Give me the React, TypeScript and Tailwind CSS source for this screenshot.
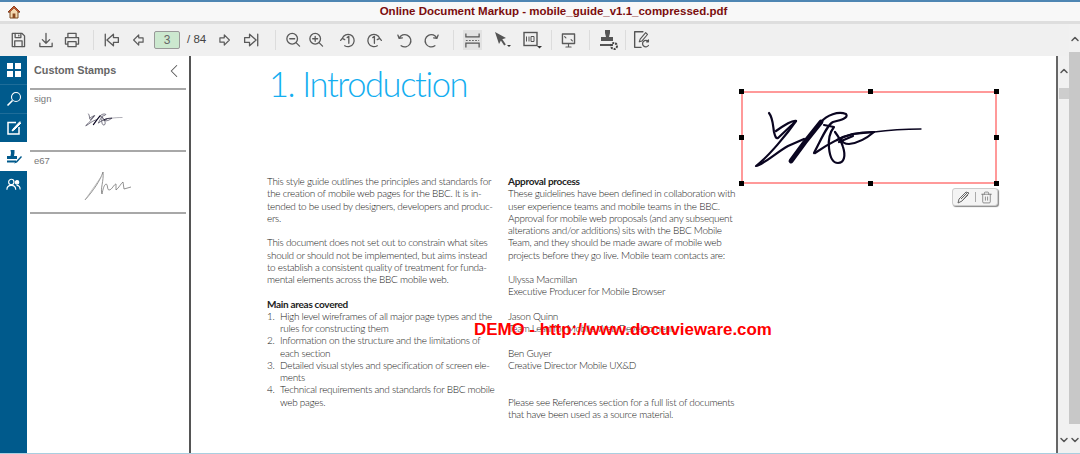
import { ReactNode } from 'react';
import { ChevronLeft, ChevronUp, ChevronDown, Trash2 } from 'lucide-react';

const S = ({ children, w = 18 }: { children: ReactNode; w?: number }) => (
  <svg width={w} height={w} viewBox="0 0 22 22" fill="none" stroke="#5a5a5a" strokeWidth="1.6" strokeLinecap="round" strokeLinejoin="round">
    {children}
  </svg>
);

const Sep = ({ className }: { className: string }) => <div className={`w-[1px] h-[20px] bg-[#dcdcdc] ${className}`} />;

const Tool = ({ children, className = '' }: { children: ReactNode; className?: string }) => (
  <div className={`w-[26px] h-[22px] flex items-center justify-center shrink-0 ${className}`}>{children}</div>
);

const Signature = ({ width, height, sw = 2.2 }: { width: number; height: number; sw?: number }) => (
  <svg width={width} height={height} viewBox="10 18 172 60" fill="none" stroke="#0a0520" strokeWidth={sw} strokeLinecap="round" strokeLinejoin="round">
    <path d="M26 23C30 28 30 36 31 42C32 46 33 49 35 48L53 31C50 30 40 36 33 41" />
    <path d="M53 31C44 44 26 66 13 76C20 75 34 62 45 56L61 49" />
    <path d="M48 71L62 52L78 32" strokeWidth={sw * 2.2} />
    <path d="M78 32C84 25 95 21 103 24C106 28 98 30 90 32C84 35 78 50 71 63" />
    <path d="M81 35L91 37C87 42 85 48 86 58C87 68 90 73 95 73C101 73 103 66 100 57C98 50 95 46 92 42" />
    <path d="M72 63C88 52 98 47 110 44L131 42" />
    <path d="M131 42C146 40 160 39 178 39" strokeWidth={sw * 0.6} />
    <path d="M94 50C104 44 116 42 131 42C124 48 116 53 106 54C102 54 99 52 98 49" />
    <path d="M96 52L110 46" />
  </svg>
);

const col1 = [
  'This style guide outlines the principles and standards for',
  'the creation of mobile web pages for the BBC. It is in-',
  'tended to be used by designers, developers and produc-',
  'ers.',
  '',
  'This document does not set out to constrain what sites',
  'should or should not be implemented, but aims instead',
  'to establish a consistent quality of treatment for funda-',
  'mental elements across the BBC mobile web.',
  '',
];

const areas = [
  ['1.', 'High level wireframes of all major page types and the', 'rules for constructing them'],
  ['2.', 'Information on the structure and the limitations of', 'each section'],
  ['3.', 'Detailed visual styles and specification of screen ele-', 'ments'],
  ['4.', 'Technical requirements and standards for BBC mobile', 'web pages.'],
];

const col2 = [
  'These guidelines have been defined in collaboration with',
  'user experience teams and mobile teams in the BBC.',
  'Approval for mobile web proposals (and any subsequent',
  'alterations and/or additions) sits with the BBC Mobile',
  'Team, and they should be made aware of mobile web',
  'projects before they go live. Mobile team contacts are:',
  '',
  'Ulyssa Macmillan',
  'Executive Producer for Mobile Browser',
  '',
  'Jason Quinn',
  'Team Lead for Mobile Web Development',
  '',
  'Ben Guyer',
  'Creative Director Mobile UX&D',
  '',
  '',
  'Please see References section for a full list of documents',
  'that have been used as a source material.',
];

const Line = ({ text, bold }: { text: string; bold?: boolean }) => (
  <div className={`h-[12.25px] ${bold ? 'font-bold text-[#222]' : ''}`}>{text}</div>
);

export default function App() {
  return (
    <div className="w-[1080px] h-[454px] overflow-hidden flex flex-col bg-white font-['Liberation_Sans',sans-serif]">
      {/* title */}
      <div className="h-[24px] shrink-0 flex bg-[#f8f8f8] border-t-[2px] border-t-[#4f86b3] border-b-[3px] border-b-[#dedede]">
        <div className="w-[27px] flex items-center justify-center pt-[1px]">
          <svg width="14" height="14" viewBox="0 0 14 14">
            <path d="M7 1L1 7h2v6h8V7h2z" fill="#f4d9b0" stroke="#7a4a20" strokeWidth="1" strokeLinejoin="round" />
            <path d="M7 1L1 7h2L7 3l4 4h2z" fill="#c8552a" stroke="#7a3a20" strokeWidth="0.6" />
            <rect x="5.6" y="8.5" width="2.8" height="4.5" fill="#8a4a20" />
          </svg>
        </div>
        <div className="flex-1 text-center text-[11.5px] leading-[19px] font-bold text-[#7b0d0d]">
          Online Document Markup - mobile_guide_v1.1_compressed.pdf
        </div>
      </div>

      <div className="flex-1 flex min-h-0">
        <div className="flex-1 flex flex-col min-w-0">
          {/* toolbar */}
          <div className="h-[32px] shrink-0 bg-[#f0f0f0] flex items-center pl-[5px] text-[#555]">
            <Tool>
              <S>
                <path d="M4 3h12l3 3v13H4z" />
                <path d="M7.5 3v5h7V3M7 19v-7h9v7M12 5v1" />
              </S>
            </Tool>
            <Tool className="ml-[2px]">
              <S>
                <path d="M11 3v12M6.5 10.5L11 15l4.5-4.5M3.5 15v4h15v-4" />
              </S>
            </Tool>
            <Tool>
              <S>
                <path d="M6 8V3h10v5M6 16H3V8h16v8h-3M6 13h10v6H6z" />
              </S>
            </Tool>
            <Sep className="ml-[8px]" />
            <Tool className="ml-[4px]">
              <S>
                <path d="M4 4v14M20 8h-6V4L6 11l8 7v-4h6z" />
              </S>
            </Tool>
            <Tool className="ml-[1px]">
              <S w={16}>
                <path d="M18 8h-6V4l-7 7 7 7v-4h6z" />
              </S>
            </Tool>
            <div className="ml-[3px] w-[26px] h-[18px] rounded-[2px] border border-[#999] bg-[#cce8cf] text-[#666] text-[12px] leading-[16px] text-center">3</div>
            <div className="ml-[7px] text-[11.5px] text-[#444] w-[30px] whitespace-pre">/ 84</div>
            <Tool className="ml-[-5px]">
              <S w={16}>
                <path d="M4 8h6V4l7 7-7 7v-4H4z" />
              </S>
            </Tool>
            <Tool className="ml-[1px]">
              <S>
                <path d="M18 4v14M2 8h6V4l8 7-8 7v-4H2z" />
              </S>
            </Tool>
            <Sep className="ml-[10px]" />
            <Tool className="ml-[4px]">
              <S>
                <circle cx="10" cy="9.5" r="6.5" />
                <path d="M7 9.5h6M15 14.5l4 4" />
              </S>
            </Tool>
            <Tool className="ml-[-3px]">
              <S>
                <circle cx="10" cy="9.5" r="6.5" />
                <path d="M7 9.5h6M10 6.5v6M15 14.5l4 4" />
              </S>
            </Tool>
            <Tool className="ml-[6px]">
              <S>
                <path d="M4 9l-2 2.5M4 9l3 1.5M4 9a7.5 7.5 0 1 1 3 9" />
                <path d="M10 8l2-1.5V15" />
              </S>
            </Tool>
            <Tool>
              <S>
                <path d="M18 9l2 2.5M18 9l-3 1.5M18 9a7.5 7.5 0 1 0-3 9" />
                <path d="M9.5 8l2-1.5V15" />
              </S>
            </Tool>
            <Tool className="ml-[4px]">
              <S>
                <path d="M5 9a7.5 7.5 0 1 1 2.5 9M5 9L3.5 5M5 9l4-.5" />
              </S>
            </Tool>
            <Tool className="ml-[2px]">
              <S>
                <path d="M17 9a7.5 7.5 0 1 0-2.5 9M17 9l1.5-4M17 9l-4-.5" />
              </S>
            </Tool>
            <Sep className="ml-[8px]" />
            <div className="ml-[9px] w-[19px] h-[20px] bg-[#e2e2e2] flex items-center justify-center shrink-0">
              <svg width="15" height="17" viewBox="0 0 17 18" fill="none" stroke="#555" strokeWidth="1.4">
                <path d="M1 1v4h15V1M1 17v-5h15v5" />
                <path d="M1 9h15" strokeDasharray="2 1.5" strokeWidth="1" />
              </svg>
            </div>
            <Tool className="ml-[8px]">
              <svg width="22" height="22" viewBox="0 0 22 22">
                <path d="M3 3l11 6-4.5 1.5L7 15z" fill="#555" />
                <path d="M9 10l4 6" stroke="#555" strokeWidth="2" />
                <path d="M15 16h4l-2 2z" fill="#333" />
              </svg>
            </Tool>
            <Tool className="ml-[3px]">
              <svg width="22" height="22" viewBox="0 0 22 22" fill="none" stroke="#555" strokeWidth="1.4">
                <rect x="3" y="3.5" width="13" height="13" />
                <path d="M5.5 7.5v5M8 7.5v5M10 7.5h3v5h-3z" strokeWidth="1" />
                <path d="M16 17h5l-2.5 2.5z" fill="#333" stroke="none" />
              </svg>
            </Tool>
            <Sep className="ml-[6px]" />
            <Tool className="ml-[3px]">
              <S w={19}>
                <rect x="4" y="3.5" width="14" height="11" />
                <path d="M8 18.5h6M11 14.5v4M6.5 6.5L8 8M15.5 11.5L14 10" strokeWidth="1.3" />
              </S>
            </Tool>
            <Sep className="ml-[8px]" />
            <Tool className="ml-[6px]">
              <svg width="26" height="24" viewBox="0 0 26 24" fill="none">
                <path d="M9 2h5v3l-1 4h4v4H5V9h5L9 5z" fill="#555" />
                <path d="M4 16h13v2H4z" fill="#555" />
                <circle cx="18" cy="18" r="3" stroke="#444" strokeWidth="2" strokeDasharray="2 1" />
              </svg>
            </Tool>
            <Sep className="ml-[3px]" />
            <Tool className="ml-[3px]">
              <svg width="22" height="22" viewBox="0 0 24 24" fill="none" stroke="#555" strokeWidth="1.5" strokeLinejoin="round" strokeLinecap="round">
                <path d="M13 3H4v17h7" />
                <path d="M16 4l2 2-6 7-3 1 1-3z" strokeWidth="1.2" />
                <path d="M19 14a3.5 3.5 0 1 0 0 4M19 12v2h-2" strokeWidth="1.4" />
              </svg>
            </Tool>
          </div>

          <div className="flex-1 flex min-h-0">
            {/* sidebar tabs */}
            <div className="w-[27px] shrink-0 bg-[#005a8c] flex flex-col text-white">
              <div className="h-[28px] flex items-center justify-center">
                <div className="grid grid-cols-2 gap-[2px]">
                  <div className="w-[6px] h-[6px] bg-white" />
                  <div className="w-[6px] h-[6px] bg-white" />
                  <div className="w-[6px] h-[6px] bg-white" />
                  <div className="w-[6px] h-[6px] bg-white" />
                </div>
              </div>
              <div className="h-[29px] flex items-center justify-center border-t border-[#1f6d99]">
                <svg width="16" height="16" viewBox="0 0 16 16" fill="none" stroke="#fff" strokeWidth="1.1">
                  <circle cx="10" cy="6" r="4.5" />
                  <path d="M6.5 9.5L1.5 14.5" strokeWidth="1.6" />
                </svg>
              </div>
              <div className="h-[29px] flex items-center justify-center border-t border-[#1f6d99]">
                <svg width="16" height="16" viewBox="0 0 16 16" fill="none" stroke="#fff" strokeWidth="1.5">
                  <path d="M10 2.5H2v11.5h11V7" />
                  <path d="M14 1.5L7 9l-1 2 2-1 7-7" fill="#fff" strokeWidth="1" />
                </svg>
              </div>
              <div className="h-[29px] flex items-center justify-center bg-white">
                <svg width="16" height="16" viewBox="0 0 16 16" fill="#005a8c">
                  <path d="M4.5 1h4v3L8 7h3v3H1V7h3.5l.5-3z" />
                  <path d="M1 11.5h9v2H1z" />
                  <path d="M15 7l1 1-5 5.5-3 1z" />
                </svg>
              </div>
              <div className="h-[28px] flex items-center justify-center">
                <svg width="15" height="14" viewBox="0 0 17 15" fill="none" stroke="#fff" strokeWidth="1.3">
                  <circle cx="6" cy="4" r="3" />
                  <path d="M1 13c0-3 2-5 5-5s5 2 5 5" />
                  <circle cx="12.5" cy="4.5" r="2" fill="#fff" />
                  <path d="M12 8c2.5 0 4 2 4 4.5" />
                </svg>
              </div>
            </div>

            {/* stamps panel */}
            <div className="w-[162px] shrink-0 px-[3px] bg-white">
              <div className="h-[34px] flex items-center justify-between pl-[4px] pr-[1px] pb-[3px] border-b-[2px] border-[#a8a8a8]">
                <span className="text-[10.8px] font-bold text-[#666]">Custom Stamps</span>
                <ChevronLeft size={22} strokeWidth={1.1} color="#555" />
              </div>
              <div className="h-[62px] border-b-[2px] border-[#a8a8a8] pl-[4px]">
                <div className="text-[9.5px] leading-[16px] pt-[1px] h-[17px] text-[#777]">sign</div>
                <div className="flex justify-center pt-[5px] pr-[12px]">
                  <Signature width={38} height={15} sw={2.4} />
                </div>
              </div>
              <div className="h-[62px] border-b-[2px] border-[#a8a8a8] pl-[4px]">
                <div className="text-[9.5px] leading-[16px] pt-[1px] h-[17px] text-[#777]">e67</div>
                <div className="flex justify-center pr-[4px]">
                  <svg width="50" height="34" viewBox="80 172 50 34" fill="none" stroke="#666" strokeWidth="0.7">
                    <path d="M82 203C90 194 97 184 100 175C101 184 97 192 99 197C100 192 101 188 103 187C105 187 104 193 106 193C109 193 111 187 113 187L113 193C116 191 118 186 120 185L121 192L128 190" />
                    <path d="M82 203L98 180" stroke="#aaa" />
                  </svg>
                </div>
              </div>
            </div>

            <div className="w-[2px] shrink-0 bg-[#555]" />

            {/* document */}
            <div className="flex-1 relative overflow-hidden bg-white font-['Lato',sans-serif] font-light text-[10px] tracking-[-0.3px] text-[#222] pl-[76px]">
              <div className="h-[118px] pt-[4px] pl-[2px] text-[34.5px] tracking-[-1.4px] leading-[48px] text-[#14aef0]">1. Introduction</div>
              <div className="flex">
                <div className="w-[241px] shrink-0 whitespace-nowrap">
                  {col1.map((t, i) => (
                    <Line key={i} text={t} />
                  ))}
                  <Line text="Main areas covered" bold />
                  {areas.map(([n, a, b]) => (
                    <div key={n}>
                      <div className="flex h-[12.25px]">
                        <span className="w-[13px] shrink-0">{n}</span>
                        <span>{a}</span>
                      </div>
                      <div className="h-[12.25px] pl-[13px]">{b}</div>
                    </div>
                  ))}
                </div>
                <div className="whitespace-nowrap">
                  <Line text="Approval process" bold />
                  {col2.map((t, i) => (
                    <Line key={i} text={t} />
                  ))}
                </div>
              </div>

              {/* selected stamp annotation */}
              <div className="absolute left-[550px] top-[35px] w-[256px] h-[93px] border-2 border-[#f99] bg-white flex items-center">
                <div className="pt-[1px] pl-[10px]">
                  <Signature width={172} height={60} />
                </div>
                <div className="absolute left-[-4px] top-[-4px] w-[5px] h-[5px] bg-black" />
                <div className="absolute left-[125px] top-[-4px] w-[5px] h-[5px] bg-black" />
                <div className="absolute right-[-4px] top-[-4px] w-[5px] h-[5px] bg-black" />
                <div className="absolute left-[-4px] top-[42px] w-[5px] h-[5px] bg-black" />
                <div className="absolute right-[-4px] top-[42px] w-[5px] h-[5px] bg-black" />
                <div className="absolute left-[-4px] bottom-[-4px] w-[5px] h-[5px] bg-black" />
                <div className="absolute left-[125px] bottom-[-4px] w-[5px] h-[5px] bg-black" />
                <div className="absolute right-[-4px] bottom-[-4px] w-[5px] h-[5px] bg-black" />
              </div>
              <div className="absolute left-[761px] top-[132px] w-[46px] h-[18px] rounded-[3px] border border-[#ccc] bg-[#f4f4f4] shadow-[1px_1px_1px_#888] flex items-center justify-center gap-[4px]">
                <svg width="14" height="14" viewBox="0 0 14 14" fill="none" stroke="#666" strokeWidth="1">
                  <path d="M1 13l1-4 7-7 3 1-7 8zM4 9l6-6M6 10l5-5" />
                </svg>
                <div className="w-[1px] h-[10px] bg-[#aaa]" />
                <Trash2 size={13} strokeWidth={1.3} color="#666" />
              </div>

              {/* watermark */}
              <div className="absolute left-[283px] top-[264px] font-['Liberation_Sans',sans-serif] font-bold text-[16.9px] tracking-normal leading-[20px] text-[#ff0000] whitespace-nowrap">
                DEMO - http://www.docuvieware.com
              </div>
            </div>

            {/* inner scrollbar */}
            <div className="w-[13px] shrink-0 bg-[#f1f1f1] border-l-[2px] border-[#666] flex flex-col items-center justify-between pb-[7px]">
              <div className="flex flex-col items-center">
                <ChevronUp size={12} strokeWidth={3} color="#555" className="mt-[9px]" />
                <div className="w-[10px] h-[11px] mt-[11px] bg-[#cdcdcd]" />
              </div>
              <ChevronDown size={12} strokeWidth={3} color="#555" />
            </div>
          </div>
        </div>

        {/* outer scrollbar */}
        <div className="w-[11px] shrink-0 bg-[#f1f1f1] flex flex-col items-center pb-[7px]">
          <ChevronUp size={12} strokeWidth={3} color="#555" className="mt-[9px]" />
          <div className="w-full flex-1 mt-[7px] mb-[10px] bg-[#c8c8c8]" />
          <ChevronDown size={12} strokeWidth={3} color="#555" />
        </div>
      </div>
      <div className="h-[1px] shrink-0 bg-[#a9cfe0]" />
    </div>
  );
}
